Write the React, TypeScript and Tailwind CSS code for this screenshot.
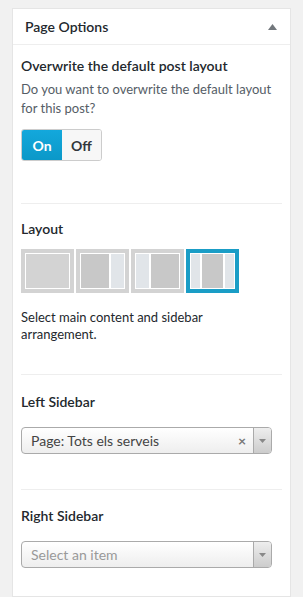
import React from 'react';

const font = { fontFamily: 'Lato, "Open Sans", Arial, sans-serif' };

function LayoutBox({ kind, active }: { kind: 'full' | 'right' | 'left' | 'both'; active?: boolean }) {
  return (
    <div
      className={`w-[53px] h-[44px] flex ${active ? 'border-[4px] border-[#1a9dc6] bg-[#1a9dc6]' : 'border-[4px] border-[#d3d3d3] bg-white'}`}
    >
      <div className="flex-1 flex gap-[2px] bg-white p-[1px]">
        {kind === 'full' && <div className="flex-1 bg-[#d3d3d3]" />}
        {kind === 'right' && (
          <>
            <div className="flex-1 bg-[#c8c8c8]" />
            <div className="w-[13px] bg-[#e1e5e9]" />
          </>
        )}
        {kind === 'left' && (
          <>
            <div className="w-[13px] bg-[#e1e5e9]" />
            <div className="flex-1 bg-[#c8c8c8]" />
          </>
        )}
        {kind === 'both' && (
          <>
            <div className="w-[9px] bg-[#e1e5e9]" />
            <div className="flex-1 bg-[#c8c8c8]" />
            <div className="w-[9px] bg-[#e1e5e9]" />
          </>
        )}
      </div>
    </div>
  );
}

function Select({ value, placeholder }: { value?: string; placeholder?: string }) {
  return (
    <div className="w-[251px] h-[27px] flex rounded-[4px] border border-[#aaaaaa] bg-gradient-to-b from-white to-[#eeeeee] overflow-hidden">
      <div className="flex-1 flex items-center pl-[9px] pr-[7px] text-[14px]">
        <span className={value ? 'text-[#444444]' : 'text-[#999999]'}>{value ?? placeholder}</span>
        {value && <span className="ml-auto text-[#777777] text-[14px] font-bold leading-none">×</span>}
      </div>
      <div className="w-[18px] border-l border-[#aaaaaa] bg-gradient-to-b from-[#eeeeee] to-[#cccccc] flex items-center justify-center">
        <svg width="7" height="4" viewBox="0 0 7 4">
          <path d="M0 0 L7 0 L3.5 4 Z" fill="#888888" />
        </svg>
      </div>
    </div>
  );
}

export default function App() {
  return (
    <div className="min-h-[597px] bg-[#f1f1f1] pt-[8px] px-[12px] text-[#23282d]" style={font}>
      <div className="bg-white border border-[#e5e5e5] h-[589px]">
        <div className="h-[36px] flex items-center justify-between pl-[12px] pr-[13px] border-b border-[#eeeeee]">
          <span className="text-[14px] font-semibold text-[#23282d]">Page Options</span>
          <svg width="9" height="6" viewBox="0 0 9 6">
            <path d="M0 6 L4.5 0 L9 6 Z" fill="#72777c" />
          </svg>
        </div>

        <div className="px-[8px]">
          <div className="pt-[11px] pb-[42px] border-b border-[#eeeeee]">
            <div className="text-[14px] font-semibold leading-[20px]">Overwrite the default post layout</div>
            <div className="mt-[4px] text-[13px] leading-[19px] text-[#555d66]">
              Do you want to overwrite the default layout for this post?
            </div>
            <div className="mt-[11px] flex w-[81px] h-[32px] rounded-[3px] overflow-hidden border border-[#cccccc]">
              <div className="w-[40px] bg-gradient-to-b from-[#13a8dc] to-[#0b98c8] text-white font-bold text-[14px] flex items-center justify-center">
                On
              </div>
              <div className="flex-1 bg-[#f7f7f7] text-[#32373c] font-bold text-[14px] flex items-center justify-center">
                Off
              </div>
            </div>
          </div>

          <div className="pt-[15px] pb-[31px] border-b border-[#eeeeee]">
            <div className="text-[14px] font-semibold leading-[20px]">Layout</div>
            <div className="mt-[10px] flex gap-[2px]">
              <LayoutBox kind="full" />
              <LayoutBox kind="right" />
              <LayoutBox kind="left" />
              <LayoutBox kind="both" active />
            </div>
            <div className="mt-[16px] max-w-[240px] text-[13px] leading-[17px] text-[#23282d]">
              Select main content and sidebar arrangement.
            </div>
          </div>

          <div className="pt-[17px] pb-[35px] border-b border-[#eeeeee]">
            <div className="text-[14px] font-semibold leading-[20px]">Left Sidebar</div>
            <div className="mt-[15px]">
              <Select value="Page: Tots els serveis" />
            </div>
          </div>

          <div className="pt-[16px]">
            <div className="text-[14px] font-semibold leading-[20px]">Right Sidebar</div>
            <div className="mt-[15px]">
              <Select placeholder="Select an item" />
            </div>
          </div>
        </div>
      </div>
    </div>
  );
}
